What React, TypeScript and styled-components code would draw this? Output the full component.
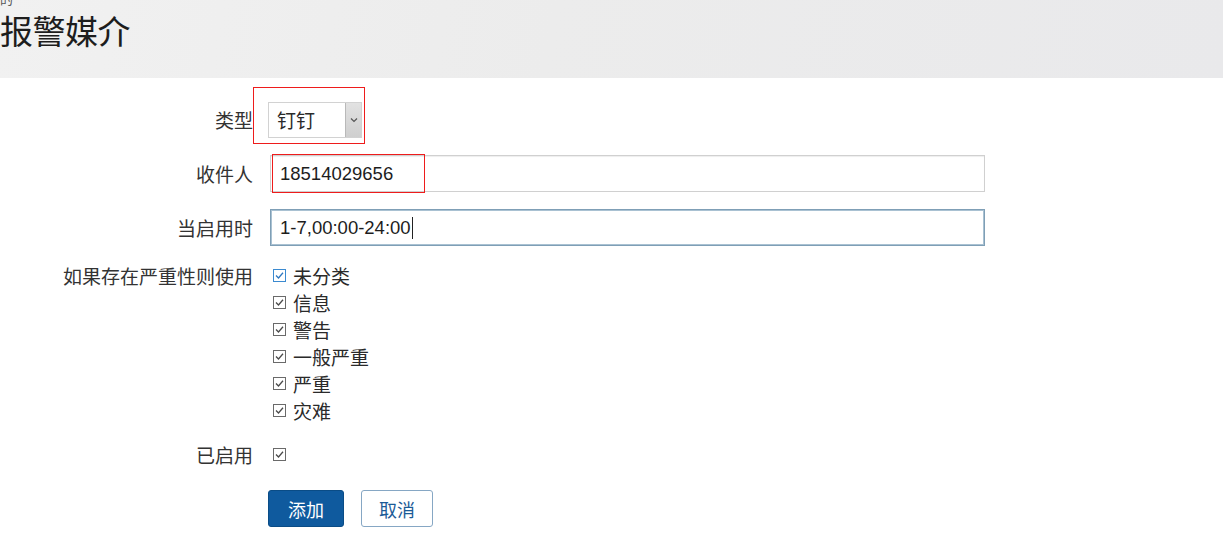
import React from "react";
import styled, { createGlobalStyle } from "styled-components";

const Global = createGlobalStyle`
  html, body { margin: 0; padding: 0; background: #fff; }
  body { font-family: "Liberation Sans", "Noto Sans CJK SC", sans-serif; color: #2b2b2b; overflow: hidden; }
`;

const Page = styled.div`
  width: 1223px;
  height: 544px;
  overflow: hidden;
  background: #fff;
`;

const Header = styled.header`
  height: 78px;
  background: linear-gradient(100deg, #f1f1f1 0%, #ececec 45%, #e9e9eb 100%);
  display: flex;
  flex-direction: column;
  overflow: hidden;
`;

const Crumb = styled.div`
  font-size: 13px;
  line-height: 13px;
  margin-top: -8px;
  color: #555;
  font-family: "Noto Sans CJK SC", sans-serif;
`;

const Title = styled.h1`
  margin: 3px 0 0 0;
  font-family: "Noto Sans CJK SC", sans-serif;
  font-weight: 400;
  font-size: 33px;
  line-height: 44px;
  color: #1d1d1d;
  letter-spacing: -0.5px;
`;

const Form = styled.form`
  display: flex;
  flex-direction: column;
  padding-top: 24px;
  font-family: "Noto Sans CJK SC", sans-serif;
`;

const Row = styled.div<{ $mt?: number; $align?: string }>`
  display: grid;
  grid-template-columns: 253px 1fr;
  column-gap: 15px;
  align-items: ${(p) => p.$align || "center"};
  margin-top: ${(p) => p.$mt ?? 0}px;
`;

const Label = styled.label<{ $lh?: number }>`
  text-align: right;
  font-size: 19px;
  color: #333;
  line-height: ${(p) => p.$lh ?? 27}px;
  white-space: nowrap;
`;

const Control = styled.div<{ $pl?: number }>`
  position: relative;
  padding-left: ${(p) => p.$pl ?? 0}px;
  display: flex;
  flex-direction: column;
  align-items: flex-start;
`;

const Annot = styled.span<{ $l: number; $t: number; $w: number; $h: number }>`
  position: absolute;
  left: ${(p) => p.$l}px;
  top: ${(p) => p.$t}px;
  width: ${(p) => p.$w}px;
  height: ${(p) => p.$h}px;
  border: 1.5px solid #ee1c1c;
  box-sizing: border-box;
  pointer-events: none;
`;

const SelectBox = styled.div`
  position: relative;
  width: 94px;
  height: 36px;
  box-sizing: border-box;
  border: 1px solid #d2d2d2;
  background: #fff;
  display: flex;
  align-items: stretch;
`;

const SelectText = styled.span`
  flex: 1;
  font-size: 19px;
  line-height: 34px;
  padding-left: 8px;
  color: #2a2a2a;
`;

const SelectArrow = styled.span`
  width: 15px;
  background: linear-gradient(#e2e2e2, #cfcfcf);
  border-left: 1px solid #b9b9b9;
  display: flex;
  align-items: center;
  justify-content: center;
`;

const TextInput = styled.div<{ $focus?: boolean }>`
  position: relative;
  width: 715px;
  height: 37px;
  box-sizing: border-box;
  margin-left: 2px;
  border: 1px solid ${(p) => (p.$focus ? "#7f9fb6" : "#d0d0d0")};
  box-shadow: ${(p) => (p.$focus ? "inset 0 0 0 1px #a9c1d2" : "inset 0 1px 1px #eee")};
  font-family: "Liberation Sans", "Noto Sans CJK SC", sans-serif;
  font-size: 18.5px;
  line-height: 35px;
  padding-left: 9px;
  color: #1d1d1d;
  display: flex;
  align-items: center;
`;

const Caret = styled.span`
  display: inline-block;
  width: 1px;
  height: 22px;
  background: #222;
  margin-left: 1px;
`;

const CheckList = styled.ul`
  list-style: none;
  margin: 0;
  padding: 0 0 0 5px;
  display: flex;
  flex-direction: column;
`;

const CheckItem = styled.li`
  display: flex;
  align-items: center;
  height: 27px;
  gap: 7px;
  font-size: 19px;
  color: #2a2a2a;
`;

const Buttons = styled.div`
  display: flex;
  gap: 17px;
`;

const Button = styled.button<{ $primary?: boolean }>`
  height: 37px;
  width: ${(p) => (p.$primary ? 76 : 72)}px;
  box-sizing: border-box;
  border-radius: 3px;
  font-family: "Noto Sans CJK SC", sans-serif;
  font-size: 18px;
  padding: 0;
  border: 1px solid ${(p) => (p.$primary ? "#0a4c86" : "#86a7c4")};
  background: ${(p) => (p.$primary ? "#0f5a9e" : "#fff")};
  color: ${(p) => (p.$primary ? "#fff" : "#1b5b97")};
`;

const Box = ({ blue }: { blue?: boolean }) => (
  <svg width="13" height="13" viewBox="0 0 13 13">
    <rect x="0.5" y="0.5" width="12" height="12" fill="#fff" stroke={blue ? "#3b8ad0" : "#6a6a6a"} strokeWidth="1" />
    <path d="M3 6.5 L5.5 9 L10 3.8" fill="none" stroke={blue ? "#2f78c0" : "#4a4a4a"} strokeWidth="1.3" />
  </svg>
);

const severities = ["未分类", "信息", "警告", "一般严重", "严重", "灾难"];

export default function App() {
  return (
    <Page>
      <Global />
      <Header>
        <Crumb>的</Crumb>
        <Title>报警媒介</Title>
      </Header>
      <Form onSubmit={(e) => e.preventDefault()}>
        <Row>
          <Label $lh={36}>类型</Label>
          <Control>
            <SelectBox>
              <SelectText>钉钉</SelectText>
              <SelectArrow>
                <svg width="8" height="6" viewBox="0 0 8 6">
                  <path d="M1 1.5 L4 4.5 L7 1.5" fill="none" stroke="#555" strokeWidth="1.2" />
                </svg>
              </SelectArrow>
              <Annot $l={-16} $t={-16} $w={112} $h={57} />
            </SelectBox>
          </Control>
        </Row>
        <Row $mt={17}>
          <Label $lh={37}>收件人</Label>
          <Control>
            <TextInput>
              18514029656
              <Annot $l={1} $t={-2} $w={153} $h={39} />
            </TextInput>
          </Control>
        </Row>
        <Row $mt={17}>
          <Label $lh={37}>当启用时</Label>
          <Control>
            <TextInput $focus>
              1-7,00:00-24:00
              <Caret />
            </TextInput>
          </Control>
        </Row>
        <Row $mt={16} $align="start">
          <Label>如果存在严重性则使用</Label>
          <Control>
            <CheckList>
              {severities.map((s, i) => (
                <CheckItem key={s}>
                  <Box blue={i === 0} />
                  <span>{s}</span>
                </CheckItem>
              ))}
            </CheckList>
          </Control>
        </Row>
        <Row $mt={17}>
          <Label>已启用</Label>
          <Control $pl={5}>
            <Box />
          </Control>
        </Row>
        <Row $mt={22}>
          <span />
          <Buttons>
            <Button $primary type="button">添加</Button>
            <Button type="button">取消</Button>
          </Buttons>
        </Row>
      </Form>
    </Page>
  );
}
